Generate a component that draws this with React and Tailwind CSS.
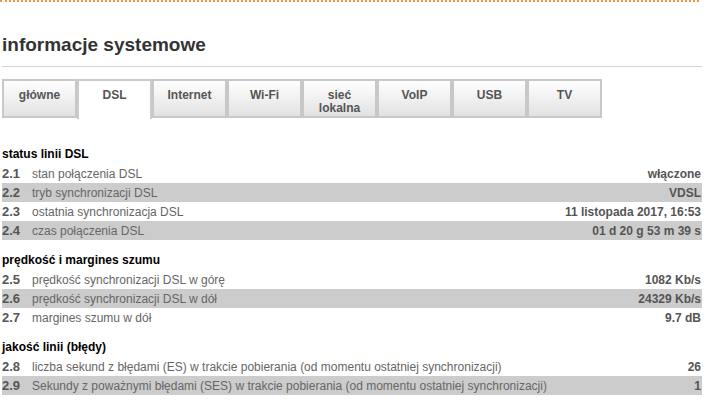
const tabs = ["główne", "DSL", "Internet", "Wi-Fi", "sieć lokalna", "VoIP", "USB", "TV"];

const sections = [
  {
    title: "status linii DSL",
    rows: [
      ["2.1", "stan połączenia DSL", "włączone"],
      ["2.2", "tryb synchronizacji DSL", "VDSL"],
      ["2.3", "ostatnia synchronizacja DSL", "11 listopada 2017, 16:53"],
      ["2.4", "czas połączenia DSL", "01 d 20 g 53 m 39 s"],
    ],
  },
  {
    title: "prędkość i margines szumu",
    rows: [
      ["2.5", "prędkość synchronizacji DSL w górę", "1082 Kb/s"],
      ["2.6", "prędkość synchronizacji DSL w dół", "24329 Kb/s"],
      ["2.7", "margines szumu w dół", "9.7 dB"],
    ],
  },
  {
    title: "jakość linii (błędy)",
    rows: [
      ["2.8", "liczba sekund z błędami (ES) w trakcie pobierania (od momentu ostatniej synchronizacji)", "26"],
      ["2.9", "Sekundy z poważnymi błędami (SES) w trakcie pobierania (od momentu ostatniej synchronizacji)", "1"],
    ],
  },
];

function Tab({ label, active }) {
  if (active) {
    return (
      <div className="w-[75px] h-[40px] border-2 border-b-0 border-[#cbcbcb] bg-white text-center pt-[8px] text-[12px] leading-[13px] font-bold text-[#555]">
        {label}
      </div>
    );
  }
  return (
    <div className="w-[75px] h-[39px] border-2 border-[#c8c8c8] bg-gradient-to-b from-white to-[#e2e2e2] text-center pt-[8px] px-2 text-[12px] leading-[13px] font-bold text-[#555]">
      {label}
    </div>
  );
}

export default function App() {
  return (
    <div className="w-[707px] h-[400px] overflow-hidden bg-white font-['Liberation_Sans',Arial,sans-serif]">
      <div className="w-[699px] border-t-2 border-dotted border-[#f7953f]" />
      <div className="px-[2px]">
        <h1 className="mt-[32px] text-[19px] leading-[22px] font-bold text-[#333]">informacje systemowe</h1>
        <div className="mt-[10px] h-px w-[700px] bg-[#d4d4d4]" />
        <div className="mt-[12px] flex items-start">
          {tabs.map((t) => (
            <Tab key={t} label={t} active={t === "DSL"} />
          ))}
        </div>
        <div className="w-[700px]">
          {sections.map((s, i) => (
            <div key={s.title} className={i === 0 ? "mt-[26px]" : "mt-[11px]"}>
              <div className="h-[19px] text-[12px] leading-[18px] font-bold text-black">{s.title}</div>
              {s.rows.map(([n, label, value], j) => (
                <div
                  key={n}
                  className={
                    "flex items-center h-[19px] text-[12px] " +
                    (j % 2 === 1 ? "bg-[#cccccc]" : "")
                  }
                >
                  <span className="w-[30px] font-bold text-[#555] text-[13px]">{n}</span>
                  <span className="flex-1 text-[#666]">{label}</span>
                  <span className="font-bold text-[#555] pr-[1px]">{value}</span>
                </div>
              ))}
            </div>
          ))}
        </div>
      </div>
    </div>
  );
}
